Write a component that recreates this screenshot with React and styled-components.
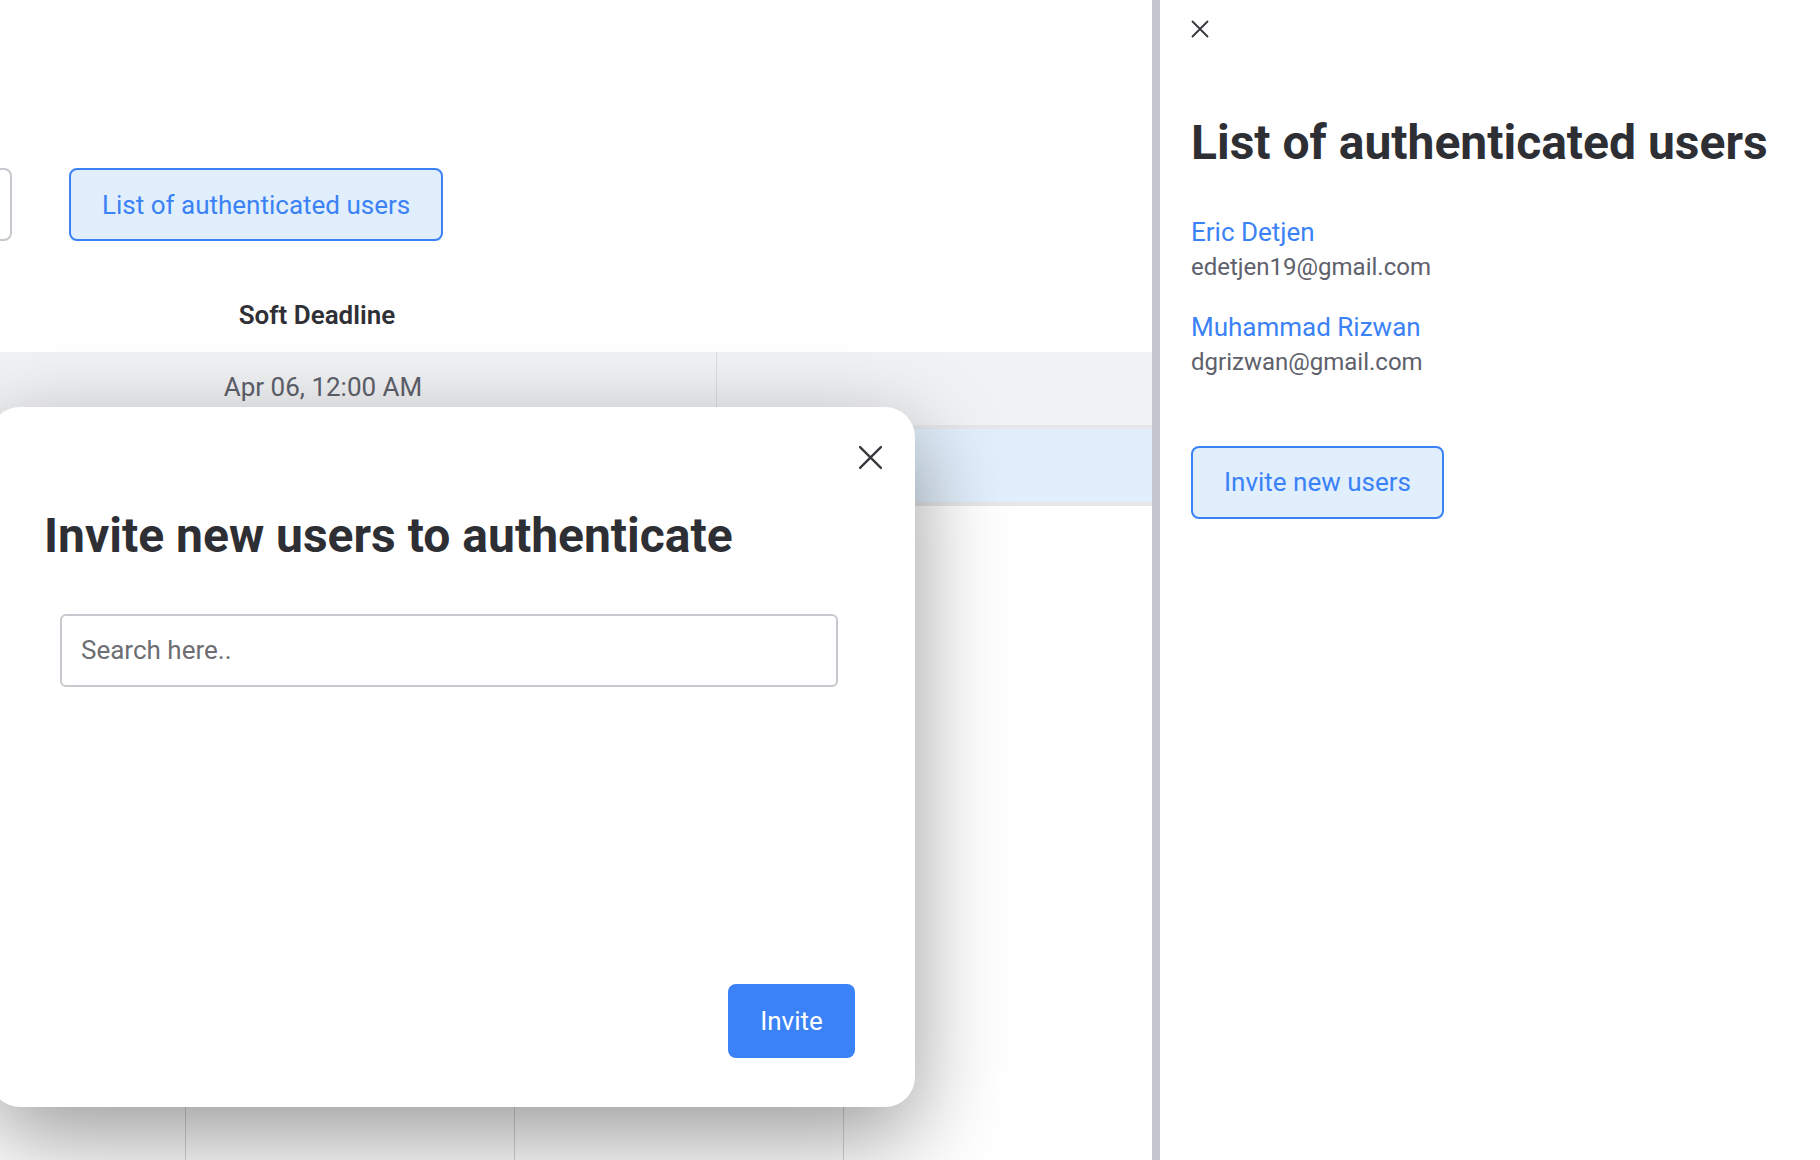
import styled, { createGlobalStyle } from "styled-components";

const GlobalStyle = createGlobalStyle`
  :root {
    --blue: #3b82f6;
    --blue-soft: #e1eefc;
    --ink: #2e2f34;
    --muted: #5e606b;
    --line: #c8c9ce;
  }

  html,
  body {
    margin: 0;
    padding: 0;
    height: 100%;
  }

  body {
    font-family: Roboto, "Liberation Sans", sans-serif;
    color: var(--ink);
    background: #ffffff;
    box-sizing: border-box;

    * {
      box-sizing: inherit;
    }
  }

  h1,
  p {
    margin: 0;
  }
`;

const Page = styled.div`
  display: flex;
  width: 1820px;
  height: 1160px;
  overflow: hidden;
`;

const Main = styled.div`
  position: relative;
  flex: 1;
  overflow: hidden;
`;

/* the board is scrolled a little to the right, so its first column is cut */
const Board = styled.div`
  margin-left: -70px;
  padding-top: 168px;
  display: flex;
  flex-direction: column;
  height: 100%;
`;

const Toolbar = styled.div`
  display: flex;
  align-items: center;
  gap: 57px;
`;

const SelectBox = styled.div`
  width: 82px;
  height: 73px;
  border: 2px solid var(--line);
  border-radius: 8px;
`;

const SoftButton = styled.button`
  height: 73px;
  padding: 0 31px;
  background: var(--blue-soft);
  color: var(--blue);
  border: 2px solid var(--blue);
  border-radius: 8px;
  font-family: inherit;
  font-size: 26px;
  cursor: pointer;
`;

const Table = styled.div`
  margin-top: 49px;
  display: grid;
  grid-template-columns: 787px 1fr;
`;

const HeadCell = styled.div`
  height: 62px;
  padding: 0 13px 12px 0;
  display: flex;
  align-items: center;
  justify-content: center;
  font-size: 26px;
  font-weight: 600;
  color: #2f3035;
`;

const Cell = styled.div`
  height: 77px;
  display: flex;
  align-items: center;
  justify-content: center;
  padding-bottom: 4px;
  font-size: 26px;
  color: var(--muted);
  background: ${({ tone }) => (tone === "blue" ? "#e1eefb" : "#f1f2f4")};
  border-bottom: 4px solid #e6e7ea;
  border-right: ${({ divided }) => (divided ? "1px solid #dcdde0" : "none")};
`;

const Lanes = styled.div`
  flex: 1;
  display: grid;
  grid-template-columns: 256px repeat(4, 329px);
`;

const Lane = styled.div`
  border-right: 1px solid #d6d6d8;
`;

const Modal = styled.div`
  position: absolute;
  left: -10px;
  top: 407px;
  width: 925px;
  height: 700px;
  display: flex;
  flex-direction: column;
  padding: 38px 32px 49px 54px;
  background: #ffffff;
  border-radius: 30px;
  box-shadow: 0 30px 90px rgba(0, 0, 0, 0.4);
  z-index: 2;
`;

const CloseRow = styled.div`
  display: flex;
  justify-content: ${({ align }) => align || "flex-end"};
`;

const CloseButton = styled.button`
  display: flex;
  padding: 0;
  border: none;
  background: none;
  cursor: pointer;
  color: #36373c;
`;

const Title = styled.h1`
  margin-top: ${({ gap }) => gap}px;
  font-size: 48px;
  font-weight: 700;
  line-height: 1.2;
  color: var(--ink);
`;

const SearchInput = styled.input`
  margin: 49px 0 0 16px;
  width: 778px;
  height: 73px;
  padding: 0 19px;
  border: 2px solid var(--line);
  border-radius: 6px;
  font-family: inherit;
  font-size: 26px;
  color: var(--ink);
  outline: none;

  &::placeholder {
    color: #6d6e73;
  }
`;

const Footer = styled.div`
  margin-top: auto;
  padding-right: 28px;
  display: flex;
  justify-content: flex-end;
`;

const PrimaryButton = styled.button`
  width: 127px;
  height: 74px;
  background: var(--blue);
  color: #ffffff;
  border: none;
  border-radius: 8px;
  font-family: inherit;
  font-size: 26px;
  cursor: pointer;
`;

const Drawer = styled.aside`
  width: 668px;
  border-left: 8px solid #c3c6cf;
  padding: 20px 31px;
  background: #ffffff;
  z-index: 3;
`;

const UserList = styled.div`
  margin: 45px 0 69px;
  display: flex;
  flex-direction: column;
  gap: 30px;
`;

const User = styled.div`
  display: flex;
  flex-direction: column;
  gap: 5px;
`;

const UserName = styled.a`
  font-size: 26px;
  line-height: 1.2;
  color: var(--blue);
  text-decoration: none;
`;

const UserEmail = styled.p`
  font-size: 24px;
  line-height: 1.2;
  color: var(--muted);
`;

const CloseIcon = ({ size, stroke }) => (
  <svg width={size} height={size} viewBox="0 0 24 24" fill="none">
    <path
      d="M2 2L22 22M22 2L2 22"
      stroke="currentColor"
      strokeWidth={stroke}
      strokeLinecap="round"
    />
  </svg>
);

const users = [
  { name: "Eric Detjen", email: "edetjen19@gmail.com" },
  { name: "Muhammad Rizwan", email: "dgrizwan@gmail.com" },
];

export default function App() {
  return (
    <>
      <GlobalStyle />
      <Page>
        <Main>
          <Board>
            <Toolbar>
              <SelectBox />
              <SoftButton>List of authenticated users</SoftButton>
            </Toolbar>
            <Table>
              <HeadCell>Soft Deadline</HeadCell>
              <HeadCell />
              <Cell divided>Apr 06, 12:00 AM</Cell>
              <Cell />
              <Cell tone="blue" divided />
              <Cell tone="blue" />
            </Table>
            <Lanes>
              <Lane />
              <Lane />
              <Lane />
              <Lane />
              <Lane />
            </Lanes>
          </Board>

          <Modal>
            <CloseRow>
              <CloseButton aria-label="Close">
                <CloseIcon size={25} stroke={2.2} />
              </CloseButton>
            </CloseRow>
            <Title gap={37}>Invite new users to authenticate</Title>
            <SearchInput placeholder="Search here.." />
            <Footer>
              <PrimaryButton>Invite</PrimaryButton>
            </Footer>
          </Modal>
        </Main>

        <Drawer>
          <CloseRow align="flex-start">
            <CloseButton aria-label="Close">
              <CloseIcon size={18} stroke={2.4} />
            </CloseButton>
          </CloseRow>
          <Title gap={76}>List of authenticated users</Title>
          <UserList>
            {users.map((u) => (
              <User key={u.email}>
                <UserName href="#">{u.name}</UserName>
                <UserEmail>{u.email}</UserEmail>
              </User>
            ))}
          </UserList>
          <SoftButton>Invite new users</SoftButton>
        </Drawer>
      </Page>
    </>
  );
}
